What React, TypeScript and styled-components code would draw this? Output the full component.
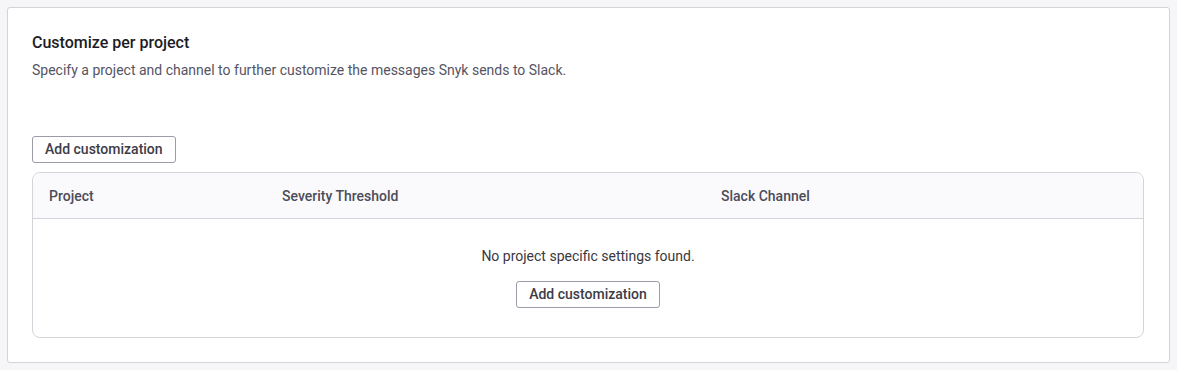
import React from "react";
import styled, { createGlobalStyle } from "styled-components";

const Global = createGlobalStyle`
  html, body { margin: 0; padding: 0; background: #f6f6f9; }
  body { font-family: Roboto, "Liberation Sans", Arial, sans-serif; -webkit-font-smoothing: antialiased; }
  * { box-sizing: border-box; }
`;

const Page = styled.div`
  padding: 7px 7px 7px 7px;
  width: 1177px;
`;

const Card = styled.section`
  background: #fff;
  border: 1px solid #d3d3da;
  border-radius: 3px;
  padding: 23px 25px 24px 24px;
  height: 356px;
  display: flex;
  flex-direction: column;
`;

const Title = styled.h2`
  margin: 0;
  font-size: 16px;
  line-height: 24px;
  font-weight: 500;
  color: #1c1c24;
`;

const Description = styled.p`
  margin: 5px 0 0;
  font-size: 14px;
  line-height: 20px;
  color: #555463;
`;

const Button = styled.button`
  font-family: inherit;
  font-size: 14px;
  font-weight: 500;
  color: #3d3c47;
  background: #fff;
  border: 1px solid #9c9ba8;
  border-radius: 3px;
  height: 27px;
  padding: 0 12px;
  cursor: pointer;
  line-height: 25px;
`;

const TopAction = styled.div`
  margin-top: 56px;
  display: flex;
`;

const Table = styled.div`
  margin-top: 9px;
  border: 1px solid #d3d3da;
  border-radius: 8px;
  overflow: hidden;
  flex: 1;
  display: flex;
  flex-direction: column;
`;

const HeaderRow = styled.div`
  display: grid;
  grid-template-columns: 233px 439px 1fr;
  height: 46px;
  align-items: center;
  background: #fafafc;
  border-bottom: 1px solid #d3d3da;
`;

const HeaderCell = styled.div`
  padding: 0 16px;
  font-size: 14px;
  font-weight: 500;
  color: #4d4c59;
`;

const Empty = styled.div`
  flex: 1;
  display: flex;
  flex-direction: column;
  align-items: center;
  padding-top: 27px;
  gap: 15px;
`;

const EmptyText = styled.div`
  font-size: 14px;
  line-height: 20px;
  color: #393842;
`;

export default function App() {
  return (
    <>
      <Global />
      <Page>
        <Card>
          <Title>Customize per project</Title>
          <Description>
            Specify a project and channel to further customize the messages Snyk sends to Slack.
          </Description>
          <TopAction>
            <Button>Add customization</Button>
          </TopAction>
          <Table>
            <HeaderRow>
              <HeaderCell>Project</HeaderCell>
              <HeaderCell>Severity Threshold</HeaderCell>
              <HeaderCell>Slack Channel</HeaderCell>
            </HeaderRow>
            <Empty>
              <EmptyText>No project specific settings found.</EmptyText>
              <Button>Add customization</Button>
            </Empty>
          </Table>
        </Card>
      </Page>
    </>
  );
}
